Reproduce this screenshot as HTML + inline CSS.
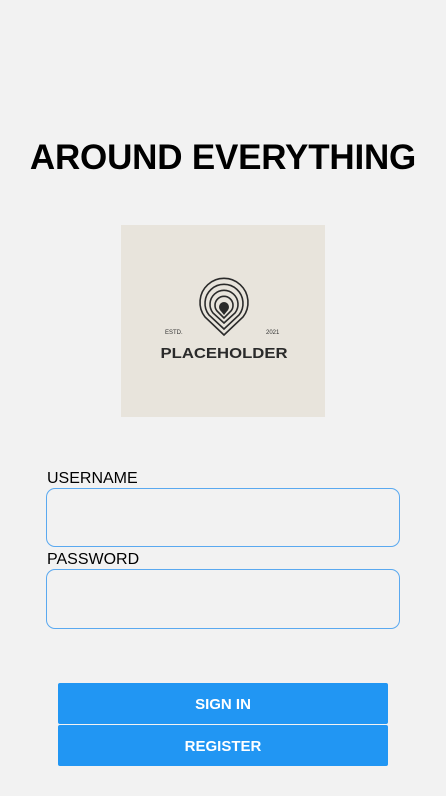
<!DOCTYPE html>
<html><head><style>
body{margin:0;width:446px;height:796px;background:#f2f2f2;font-family:"Liberation Sans",sans-serif;position:relative;overflow:hidden}
.a{position:absolute}
h1{position:absolute;left:0;width:446px;top:138px;margin:0;text-align:center;font-size:35px;font-weight:bold;color:#000;letter-spacing:-0.2px}
.logo{left:121px;top:225px;width:204px;height:192px;background:#e8e4dc}
.lbl{font-size:16px;color:#000;left:47px}
.in{left:46px;width:352px;height:57px;border:1px solid #5aa9f0;border-radius:9px}
.btn{left:58px;width:330px;height:41px;background:#2196f3;color:#fff;font-weight:bold;font-size:15px;text-align:center;line-height:44px;border-radius:2px}
</style></head><body>
<h1>AROUND EVERYTHING</h1>
<div class="a logo">
<svg width="204" height="192" viewBox="0 0 204 192" style="position:absolute;left:0;top:0">
<g transform="translate(0,4)">
<g fill="none" stroke="#2a2a2a" stroke-width="1.6">
<path d="M103 106 L84 88 A24 24 0 1 1 122 88 Z"/>
<path d="M103 100 L88 86 A19 19 0 1 1 118 86 Z"/>
<path d="M103 94 L92 84 A14 14 0 1 1 114 84 Z"/>
<path d="M103 89 L96 82 A9 9 0 1 1 110 82 Z"/>
</g>
<circle cx="103" cy="78" r="5" fill="#2a2a2a"/>
<path d="M99 81 L103 86 L107 81 Z" fill="#2a2a2a"/>
</g>
<text x="44" y="109" font-size="6" fill="#333" font-family="Liberation Sans">ESTD.</text>
<text x="145" y="109" font-size="6" fill="#333" font-family="Liberation Sans">2021</text>
<text x="103" y="133" font-size="15" font-weight="bold" fill="#2a2a2a" text-anchor="middle" font-family="Liberation Sans" textLength="127" lengthAdjust="spacingAndGlyphs">PLACEHOLDER</text>
</svg>
</div>
<div class="a lbl" style="top:470px">USERNAME</div>
<div class="a in" style="top:488px"></div>
<div class="a lbl" style="top:551px">PASSWORD</div>
<div class="a in" style="top:569px;height:58px"></div>
<div class="a btn" style="top:683px">SIGN IN</div>
<div class="a btn" style="top:725px">REGISTER</div>
</body></html>
